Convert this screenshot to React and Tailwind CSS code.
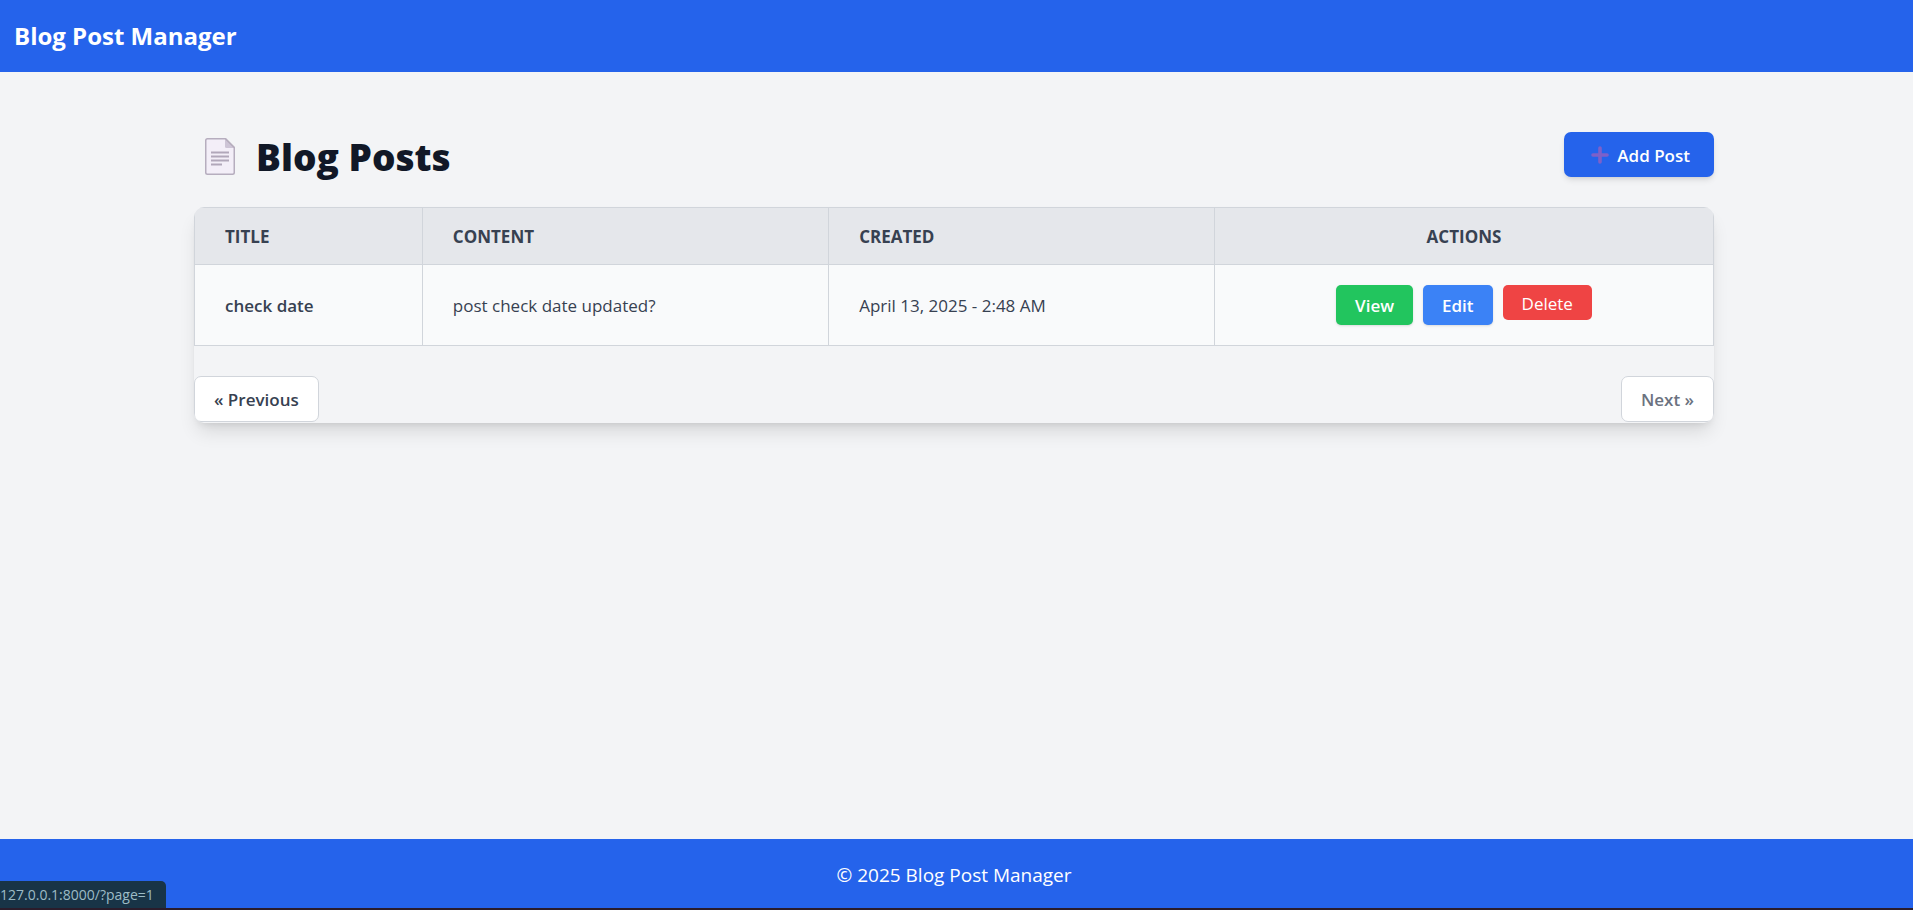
import React from "react";

const posts = [
  { title: "check date", content: "post check date updated?", created: "April 13, 2025 - 2:48 AM" },
];

function PageIcon() {
  return (
    <svg width="30" height="37" viewBox="0 0 30 37" fill="none" aria-hidden="true">
      <path d="M2.5 .75H20.5L29.25 9.5V34.5Q29.25 36.25 27.5 36.25H2.5Q.75 36.25 .75 34.5V2.5Q.75 .75 2.5 .75Z" fill="#f3eef8" stroke="#b6adbe" strokeWidth="1.5" strokeLinejoin="round" />
      <path d="M20 1.2V8.5Q20 10 21.5 10H29Z" fill="#cdc4d6" />
      <path d="M20.5 .75L29.25 9.5" stroke="#b6adbe" strokeWidth="1.5" />
      <path d="M6 14.5H24M6 18.5H24M6 22.5H24M6 26.5H17" stroke="#b1a7ba" strokeWidth="1.8" />
    </svg>
  );
}

function PlusIcon() {
  return (
    <svg width="18" height="18" viewBox="0 0 18 18" aria-hidden="true">
      <path d="M9 2V16M2 9H16" stroke="#7d60c9" strokeWidth="3.6" strokeLinecap="round" />
    </svg>
  );
}

const headCell = "border border-[#d1d5db] px-[30px] pt-4 pb-[15px] font-bold";
const bodyCell = "border border-[#d1d5db] px-[30px] py-5";

export default function App() {
  return (
    <div className="relative flex min-h-screen flex-col overflow-hidden bg-[#f3f4f6] font-['Open_Sans','Noto_Sans',sans-serif] text-[17px] leading-[25px] text-[#374151]">
      <header className="bg-[#2563eb] px-[14px] py-5">
        <a href="#home" className="block text-2xl font-bold text-white">Blog Post Manager</a>
      </header>

      <main className="flex-1 pr-[5px] pt-[60px]">
        <div className="mx-auto w-full max-w-[1520px]">
          <div className="mb-[30px] flex items-start justify-between">
            <h1 className="flex h-[45px] items-center gap-[21px] pl-[11px] pt-1 text-[37px] font-extrabold text-[#111827]">
              <PageIcon />
              Blog Posts
            </h1>
            <a href="#add" className="flex h-[45px] items-center gap-2 rounded-[7px] bg-[#2563eb] pr-6 pl-[27px] pt-px font-semibold text-white shadow-md">
              <PlusIcon />
              Add Post
            </a>
          </div>

          <div className="overflow-hidden rounded-[10px] shadow-[0_12px_19px_-4px_rgba(0,0,0,0.12),0_5px_8px_-5px_rgba(0,0,0,0.12)]">
            <table className="w-full table-fixed border-collapse bg-[#f9fafb] text-left">
              <colgroup>
                <col className="w-[15%]" />
                <col className="w-[26.75%]" />
                <col className="w-[25.4%]" />
                <col />
              </colgroup>
              <thead className="bg-[#e5e7eb] uppercase">
                <tr>
                  <th className={headCell}>Title</th>
                  <th className={headCell}>Content</th>
                  <th className={headCell}>Created</th>
                  <th className={headCell + " text-center"}>Actions</th>
                </tr>
              </thead>
              <tbody>
                {posts.map((post) => (
                  <tr key={post.title}>
                    <td className={bodyCell + " font-semibold"}>{post.title}</td>
                    <td className={bodyCell}>{post.content}</td>
                    <td className={bodyCell}>{post.created}</td>
                    <td className={bodyCell}>
                      <div className="flex items-start justify-center gap-[10px]">
                        <a href="#view" className="flex h-10 items-center rounded-[5px] bg-[#22c55e] px-[19px] pt-px font-semibold text-white shadow-sm">View</a>
                        <a href="#edit" className="flex h-10 items-center rounded-[5px] bg-[#3b82f6] px-[19px] pt-px font-semibold text-white shadow-sm">Edit</a>
                        <button type="button" className="flex h-[35px] items-center rounded-[5px] bg-[#ef4444] px-[19px] pt-px text-white">Delete</button>
                      </div>
                    </td>
                  </tr>
                ))}
              </tbody>
            </table>

            <nav className="mt-[30px] flex justify-between pb-px" aria-label="Pagination">
              <a href="#previous" className="flex h-[46px] items-center rounded-[7px] border border-[#d1d5db] bg-white px-[19px] pt-px font-semibold">« Previous</a>
              <button type="button" className="flex h-[46px] items-center rounded-[7px] border border-[#d1d5db] bg-white px-[19px] pt-px font-semibold text-[#6b7280]">Next »</button>
            </nav>
          </div>
        </div>
      </main>

      <footer className="border-b-2 border-[#2a1c2b] bg-[#2563eb] pt-6 pb-5 pr-[5px] text-center text-[19px] text-white">
        <p>© 2025 Blog Post Manager</p>
      </footer>

      <div className="absolute bottom-[2px] left-0 rounded-tr-[5px] bg-[#183447] pr-3 text-sm leading-[27px] text-[#9dbcc6]">
        127.0.0.1:8000/?page=1
      </div>
    </div>
  );
}
